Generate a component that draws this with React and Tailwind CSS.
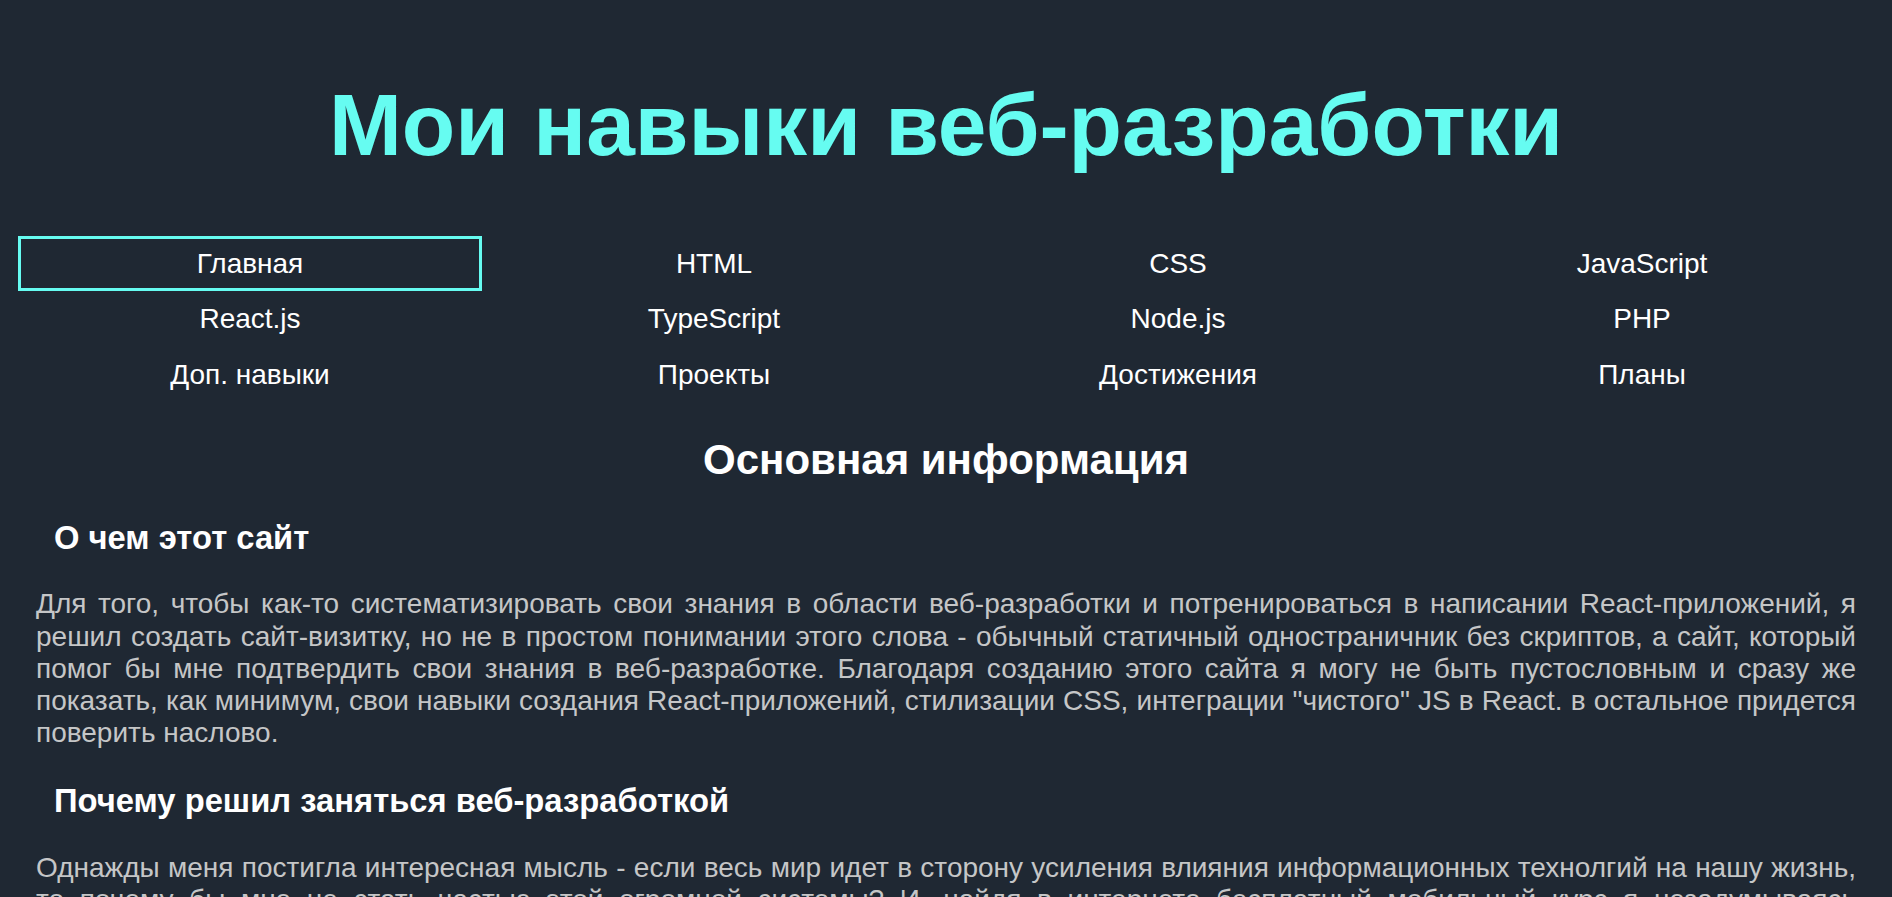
const navItems = [
  'Главная', 'HTML', 'CSS', 'JavaScript',
  'React.js', 'TypeScript', 'Node.js', 'PHP',
  'Доп. навыки', 'Проекты', 'Достижения', 'Планы',
];

export default function App() {
  return (
    <div className="min-h-screen bg-[#1f2833] font-['Liberation_Sans',Arial,sans-serif] pb-10">
      <header className="pt-[75px]">
        <h1 className="text-center text-[87.5px] font-bold leading-[1.15] text-[#66fcf1]">
          Мои навыки веб-разработки
        </h1>
      </header>

      {/* Navigation */}
      <nav className="mt-[60px] grid grid-cols-4 px-[18px]">
        {navItems.map((item, i) => (
          <a
            key={item}
            href="#"
            className={`block border-[3px] py-2 text-center text-[28px] leading-[1.2] text-white ${
              i === 0 ? 'border-[#66fcf1]' : 'border-transparent'
            }`}
          >
            {item}
          </a>
        ))}
      </nav>

      <main>
        <h2 className="mt-[34px] text-center text-[42px] font-bold leading-[1.15] text-white">
          Основная информация
        </h2>

        <section>
          <h3 className="mt-[34px] pl-[54px] text-[32.76px] font-bold leading-[1.15] text-white">
            О чем этот сайт
          </h3>
          <p className="mt-[32px] px-[36px] text-justify text-[28px] leading-[1.15] text-[#c5c6c7]">
            Для того, чтобы как-то систематизировать свои знания в области веб-разработки и потренироваться в написании React-приложений, я решил создать сайт-визитку, но не в простом понимании этого слова - обычный статичный одностраничник без скриптов, а сайт, который помог бы мне подтвердить свои знания в веб-разработке. Благодаря созданию этого сайта я могу не быть пустословным и сразу же показать, как минимум, свои навыки создания React-приложений, стилизации CSS, интеграции "чистого" JS в React. в остальное придется поверить наслово.
          </p>
        </section>

        <section>
          <h3 className="mt-[33px] pl-[54px] text-[32.76px] font-bold leading-[1.15] text-white">
            Почему решил заняться веб-разработкой
          </h3>
          <p className="mt-[32px] px-[36px] text-justify text-[28px] leading-[1.15] text-[#c5c6c7]">
            Однажды меня постигла интересная мысль - если весь мир идет в сторону усиления влияния информационных технолгий на нашу жизнь, то почему бы мне не стать частью этой огромной системы? И, найдя в интернете бесплатный мобильный курс я незадумываясь приступил к обучению. Спустя некоторое время я понял, что это действительно мое, и продолжил изучать веб-разработку уже более серьезно.
          </p>
        </section>
      </main>
    </div>
  );
}
